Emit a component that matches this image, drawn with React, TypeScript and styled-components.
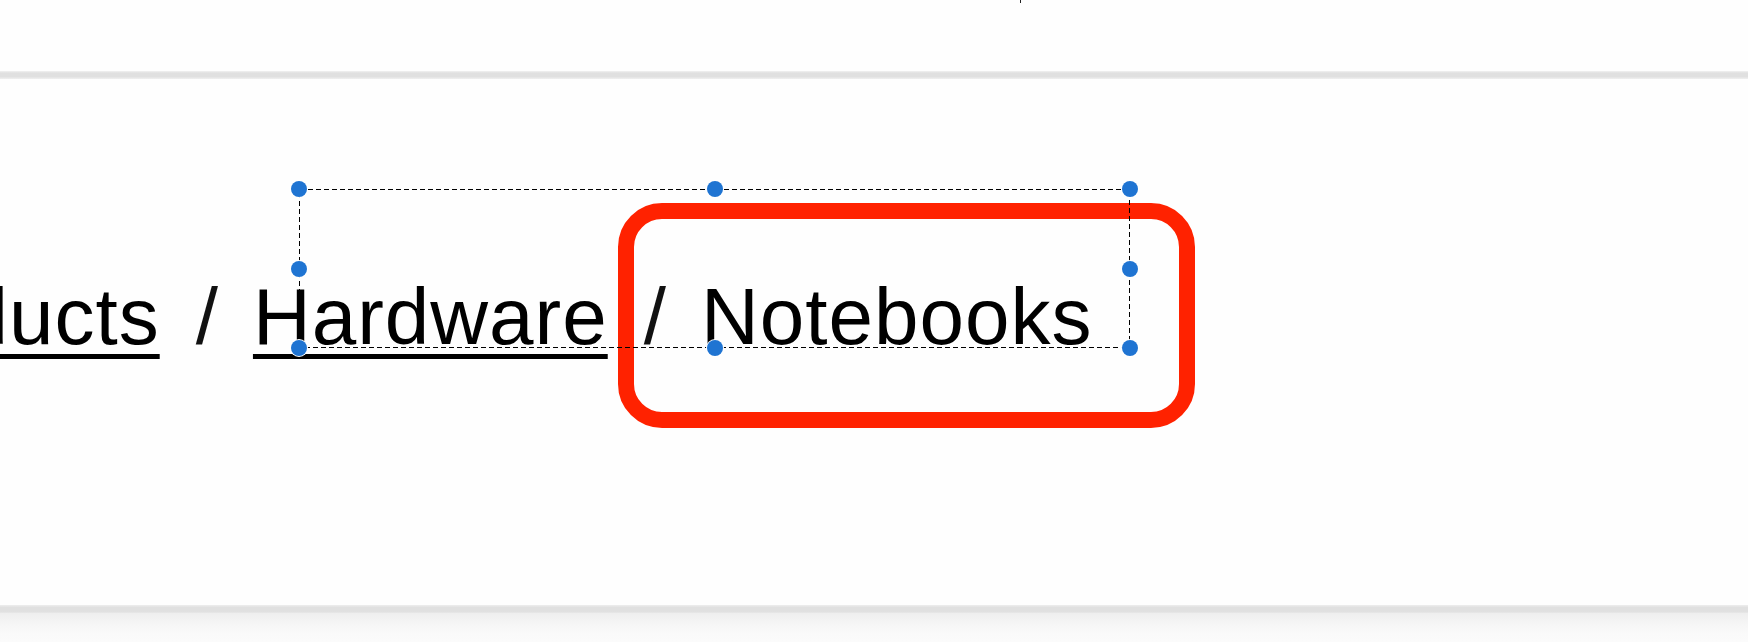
import styled, { createGlobalStyle } from 'styled-components';

const crumbs = [
  { label: 'Products', href: '#products' },
  { label: 'Hardware', href: '#hardware' },
];
const current = 'Notebooks';

const handles = [
  [0, 0],
  [50, 0],
  [100, 0],
  [0, 50],
  [100, 50],
  [0, 100],
  [50, 100],
  [100, 100],
];

export default function App() {
  return (
    <>
      <GlobalStyle />
      <Page>
        <TopBar>
          <Tick />
        </TopBar>
        <TopRule />
        <Main>
          <Breadcrumb aria-label="breadcrumb">
            {crumbs.map((crumb) => (
              <Crumb key={crumb.label}>
                <CrumbLink href={crumb.href}>{crumb.label}</CrumbLink>
                <Separator>/</Separator>
              </Crumb>
            ))}
            <Current aria-current="page">{current}</Current>
          </Breadcrumb>

          <Highlight aria-hidden="true" />
          <Selection aria-hidden="true">
            <svg width="100%" height="100%" shapeRendering="crispEdges">
              <rect
                x="0.5"
                y="0.5"
                width="830"
                height="158"
                fill="none"
                stroke="#000"
                strokeWidth="1"
                strokeDasharray="5 3"
              />
            </svg>
            {handles.map(([x, y]) => (
              <Handle key={`${x}-${y}`} style={{ left: `${x}%`, top: `${y}%` }} />
            ))}
          </Selection>
        </Main>
        <BottomRule />
        <Footer />
      </Page>
    </>
  );
}

const GlobalStyle = createGlobalStyle`
  html, body {
    margin: 0;
    padding: 0;
    background: #fefefe;
    overflow: hidden;
  }
  * {
    box-sizing: border-box;
  }
`;

const Page = styled.div`
  width: 1748px;
  height: 642px;
  display: flex;
  flex-direction: column;
  font-family: 'Liberation Sans', Arial, sans-serif;
`;

const TopBar = styled.header`
  height: 71px;
  display: flex;
  padding-left: 1020px;
  background: #fefefe;
`;

const Tick = styled.span`
  width: 1px;
  height: 3px;
  background: #222;
`;

const TopRule = styled.div`
  height: 8px;
  background: linear-gradient(#f1f1f1, #e0e0e0 25%, #e0e0e0 70%, #f0f0f0);
`;

const Main = styled.main`
  position: relative;
  height: 526px;
  padding-top: 198px;
  background: #fefefe;
`;

const Breadcrumb = styled.nav`
  display: flex;
  align-items: baseline;
  margin-left: -164px;
  font-size: 80px;
  line-height: 80px;
  letter-spacing: 1px;
  color: #000;
  white-space: nowrap;
`;

const Crumb = styled.span`
  display: inline-flex;
  align-items: baseline;
`;

const CrumbLink = styled.a`
  color: #000;
  text-decoration: underline;
  text-decoration-thickness: 5px;
  text-underline-offset: 10px;
`;

const Separator = styled.span`
  margin: 0 34px 0 36px;
  color: #111;
`;

const Current = styled.span`
  color: #000;
`;

const Highlight = styled.div`
  position: absolute;
  left: 618px;
  top: 124px;
  width: 577px;
  height: 225px;
  border: 16px solid #ff2200;
  border-radius: 44px;
`;

const Selection = styled.div`
  position: absolute;
  left: 299px;
  top: 110px;
  width: 831px;
  height: 159px;

  svg {
    display: block;
  }
`;

const Handle = styled.span`
  position: absolute;
  width: 16px;
  height: 16px;
  margin: -8px 0 0 -8px;
  border-radius: 50%;
  background: #1f74d2;
  box-shadow: 0 0 0 1px #fff;
`;

const BottomRule = styled.div`
  height: 8px;
  background: linear-gradient(#eeeeee, #e0e0e0 30%, #e0e0e0 80%, #e8e8e8);
`;

const Footer = styled.footer`
  flex: 1;
  background: linear-gradient(#eeeeee, #f6f6f6 40%, #fafafa 70%, #fbfbfb);
`;
